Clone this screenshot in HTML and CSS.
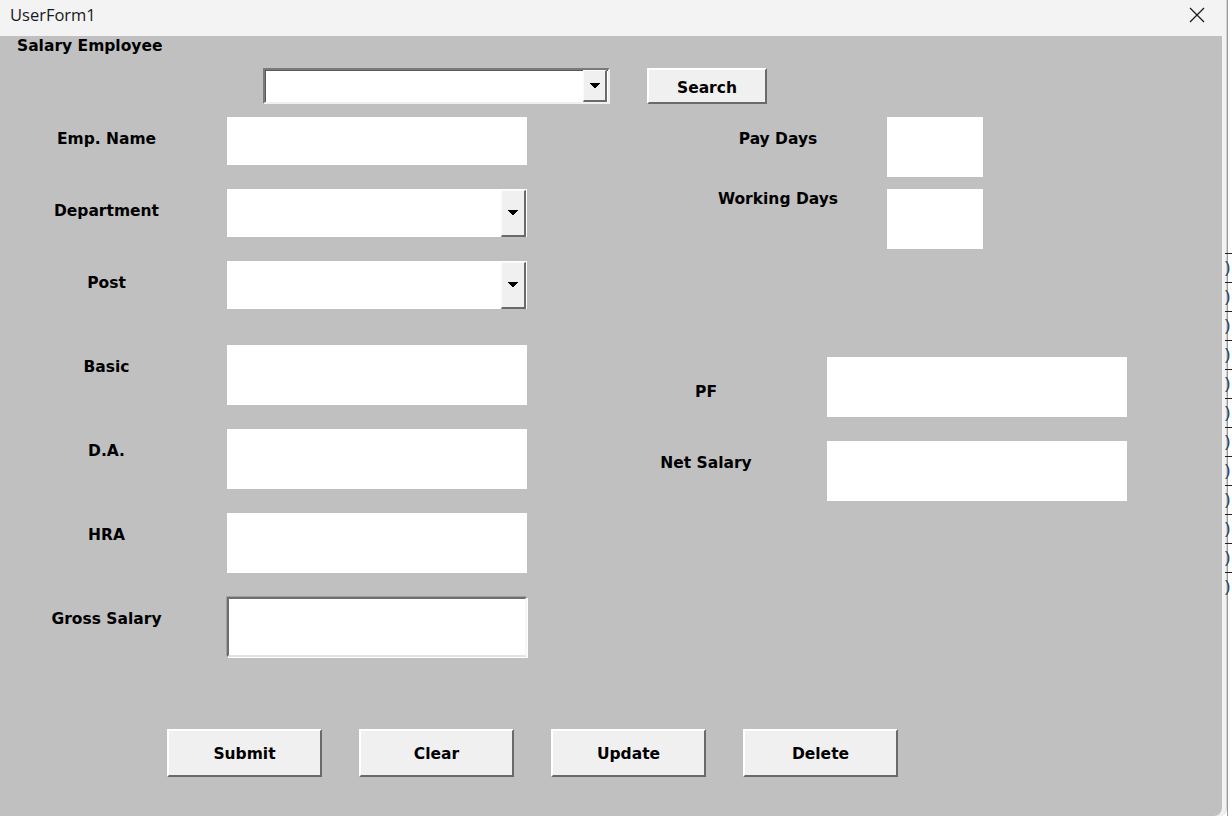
FILE: index.html
```html
<!DOCTYPE html>
<html>
<head>
<meta charset="utf-8">
<title>UserForm1</title>
<link rel="stylesheet" href="styles.css">
</head>
<body>
<div class="screen">
  <div class="window">
    <div class="titlebar">
      <span class="title">UserForm1</span>
      <svg class="close" width="16" height="16" viewBox="0 0 16 16"><path d="M1 1 L15 15 M15 1 L1 15" stroke="#1a1a1a" stroke-width="1.3" fill="none"/></svg>
    </div>
    <div class="form">
      <div class="caption">Salary Employee</div>
      <div class="searchrow">
        <div class="combo">
          <div class="combo-btn"><svg width="10" height="6" viewBox="0 0 10 6" shape-rendering="crispEdges"><polygon points="0,0 10,0 5,5.5" fill="#000"/></svg></div>
        </div>
        <div class="btn search-btn">Search</div>
      </div>
      <div class="columns">
        <div class="left">
          <div class="row"><div class="label">Emp. Name</div><div class="field h48"></div></div>
          <div class="row gap24"><div class="label">Department</div><div class="field h48 dd"><div class="dd-btn"><svg width="10" height="6" viewBox="0 0 10 6" shape-rendering="crispEdges"><polygon points="0,0 10,0 5,5.5" fill="#000"/></svg></div></div></div>
          <div class="row gap24"><div class="label">Post</div><div class="field h48 dd"><div class="dd-btn"><svg width="10" height="6" viewBox="0 0 10 6" shape-rendering="crispEdges"><polygon points="0,0 10,0 5,5.5" fill="#000"/></svg></div></div></div>
          <div class="row gap36"><div class="label">Basic</div><div class="field h60"></div></div>
          <div class="row gap24"><div class="label">D.A.</div><div class="field h60"></div></div>
          <div class="row gap24"><div class="label">HRA</div><div class="field h60"></div></div>
          <div class="row gap24"><div class="label">Gross Salary</div><div class="field h60 sunken"></div></div>
        </div>
        <div class="right">
          <div class="rrow g1"><div class="rlabel">Pay Days</div><div class="field small"></div></div>
          <div class="rrow g1 top12"><div class="rlabel p0">Working Days</div><div class="field small"></div></div>
          <div class="rrow g2 top108"><div class="rlabel p25">PF</div><div class="field wide"></div></div>
          <div class="rrow g2 top24"><div class="rlabel">Net Salary</div><div class="field wide"></div></div>
        </div>
      </div>
      <div class="buttons">
        <div class="btn big">Submit</div>
        <div class="btn big">Clear</div>
        <div class="btn big">Update</div>
        <div class="btn big">Delete</div>
      </div>
    </div>
  </div>
  <div class="sheet">
    <div class="sheet-top"></div>
    <div class="sheet-rows">
      <div class="cell">)</div><div class="cell">)</div><div class="cell">)</div><div class="cell">)</div>
      <div class="cell">)</div><div class="cell">)</div><div class="cell">)</div><div class="cell">)</div>
      <div class="cell">)</div><div class="cell">)</div><div class="cell">)</div><div class="cell">)</div>
    </div>
  </div>
</div>
</body>
</html>
```

FILE: styles.css
```css
* { box-sizing: border-box; }
html, body { margin: 0; padding: 0; }
body {
  width: 1232px;
  height: 816px;
  overflow: hidden;
  background: #ffffff;
  font-family: "DejaVu Sans", "Liberation Sans", sans-serif;
}
.screen {
  display: flex;
  width: 1232px;
  height: 816px;
}
.window {
  width: 1227px;
  height: 816px;
  display: flex;
  flex-direction: column;
  background: #f3f3f3;
  border-right: 1px solid #d4d4d4;
  border-bottom-right-radius: 8px;
  overflow: hidden;
}
.titlebar {
  height: 36px;
  flex: none;
  display: flex;
  align-items: center;
  justify-content: space-between;
  padding: 0 21px 0 10px;
  background: #f3f3f3;
}
.title {
  font-family: "Open Sans", "Noto Sans", sans-serif;
  font-size: 16.5px;
  color: #1a1a1a;
  margin-top: -8px;
}
.close { margin-top: -7px; }
.form {
  flex: 1;
  width: 1222px;
  background: #c0c0c0;
  border-bottom-right-radius: 8px;
  display: flex;
  flex-direction: column;
  font-weight: bold;
  font-size: 15.5px;
  line-height: 18px;
  color: #000;
}
.caption {
  padding: 1px 0 0 17px;
  height: 19px;
}
.searchrow {
  display: flex;
  align-items: center;
  margin-top: 13px;
  padding-left: 263px;
  height: 36px;
}
.combo {
  width: 347px;
  height: 36px;
  background: #fff;
  border-top: 2px solid #7a7a7a;
  border-left: 2px solid #7a7a7a;
  border-bottom: 2px solid #f0f0f0;
  border-right: 2px solid #f0f0f0;
  box-shadow: inset 1px 1px 0 #5a5a5a;
  display: flex;
  justify-content: flex-end;
  padding: 0 1px 0 0;
}
.combo-btn, .dd-btn {
  background: #f0f0f0;
  border-top: 1px solid #fafafa;
  border-left: 1px solid #fafafa;
  border-right: 2px solid #6a6a6a;
  border-bottom: 2px solid #6a6a6a;
  display: flex;
  align-items: center;
  justify-content: center;
}
.combo-btn {
  width: 24px;
  height: 32px;
}
.btn {
  background: #f0f0f0;
  border-top: 2px solid #ffffff;
  border-left: 2px solid #ffffff;
  border-right: 2px solid #6a6a6a;
  border-bottom: 2px solid #6a6a6a;
  display: flex;
  align-items: center;
  justify-content: center;
}
.search-btn {
  margin-left: 37px;
  width: 120px;
  height: 36px;
  padding-top: 3px;
}
.columns {
  display: flex;
  margin-top: 13px;
}
.left {
  width: 527px;
  flex: none;
  display: flex;
  flex-direction: column;
}
.row { display: flex; }
.gap24 { margin-top: 24px; }
.gap36 { margin-top: 36px; }
.label {
  width: 213px;
  text-align: center;
  padding-top: 13px;
}
.field {
  background: #ffffff;
  flex: none;
}
.row .field {
  margin-left: 14px;
  width: 300px;
}
.h48 { height: 48px; }
.h60 { height: 60px; }
.dd {
  display: flex;
  justify-content: flex-end;
  padding: 1px 1px 0 0;
}
.dd-btn {
  width: 25px;
  height: 47px;
}
.sunken {
  border-top: 2px solid #6e6e6e;
  border-left: 2px solid #6e6e6e;
  border-bottom: 2px solid #e2e2e2;
  border-right: 2px solid #f6f6f6;
  box-shadow: -1px -1px 0 #a0a0a0, 1px 1px 0 #ffffff;
}
.right {
  display: flex;
  flex-direction: column;
}
.rrow { display: flex; }
.rlabel {
  width: 156px;
  text-align: center;
  padding-top: 13px;
  flex: none;
}
.rlabel.p0 { padding-top: 1px; }
.rlabel.p25 { padding-top: 26px; }
.g1 { padding-left: 173px; }
.g1 .field { margin-left: 31px; }
.g2 { padding-left: 101px; }
.g2 .field { margin-left: 43px; }
.top12 { margin-top: 12px; }
.top24 { margin-top: 24px; }
.top108 { margin-top: 108px; }
.small { width: 96px; height: 60px; }
.wide { width: 300px; height: 60px; }
.buttons {
  display: flex;
  gap: 37px;
  padding-left: 167px;
  margin-top: 72px;
}
.big {
  width: 155px;
  height: 48px;
  padding-top: 2px;
}
.sheet {
  flex: 1;
  display: flex;
  flex-direction: column;
  background: #ffffff;
  border-left: 1px solid #9a9a9a;
}
.sheet-top {
  height: 253px;
  background: #ffffff;
}
.sheet-rows {
  display: flex;
  flex-direction: column;
}
.cell {
  height: 29px;
  border-top: 1px solid #222;
  font-family: "Liberation Sans", sans-serif;
  font-weight: normal;
  font-size: 16px;
  line-height: 28px;
  color: #1d3a5c;
  margin-left: -3px;
  overflow: hidden;
}
```
